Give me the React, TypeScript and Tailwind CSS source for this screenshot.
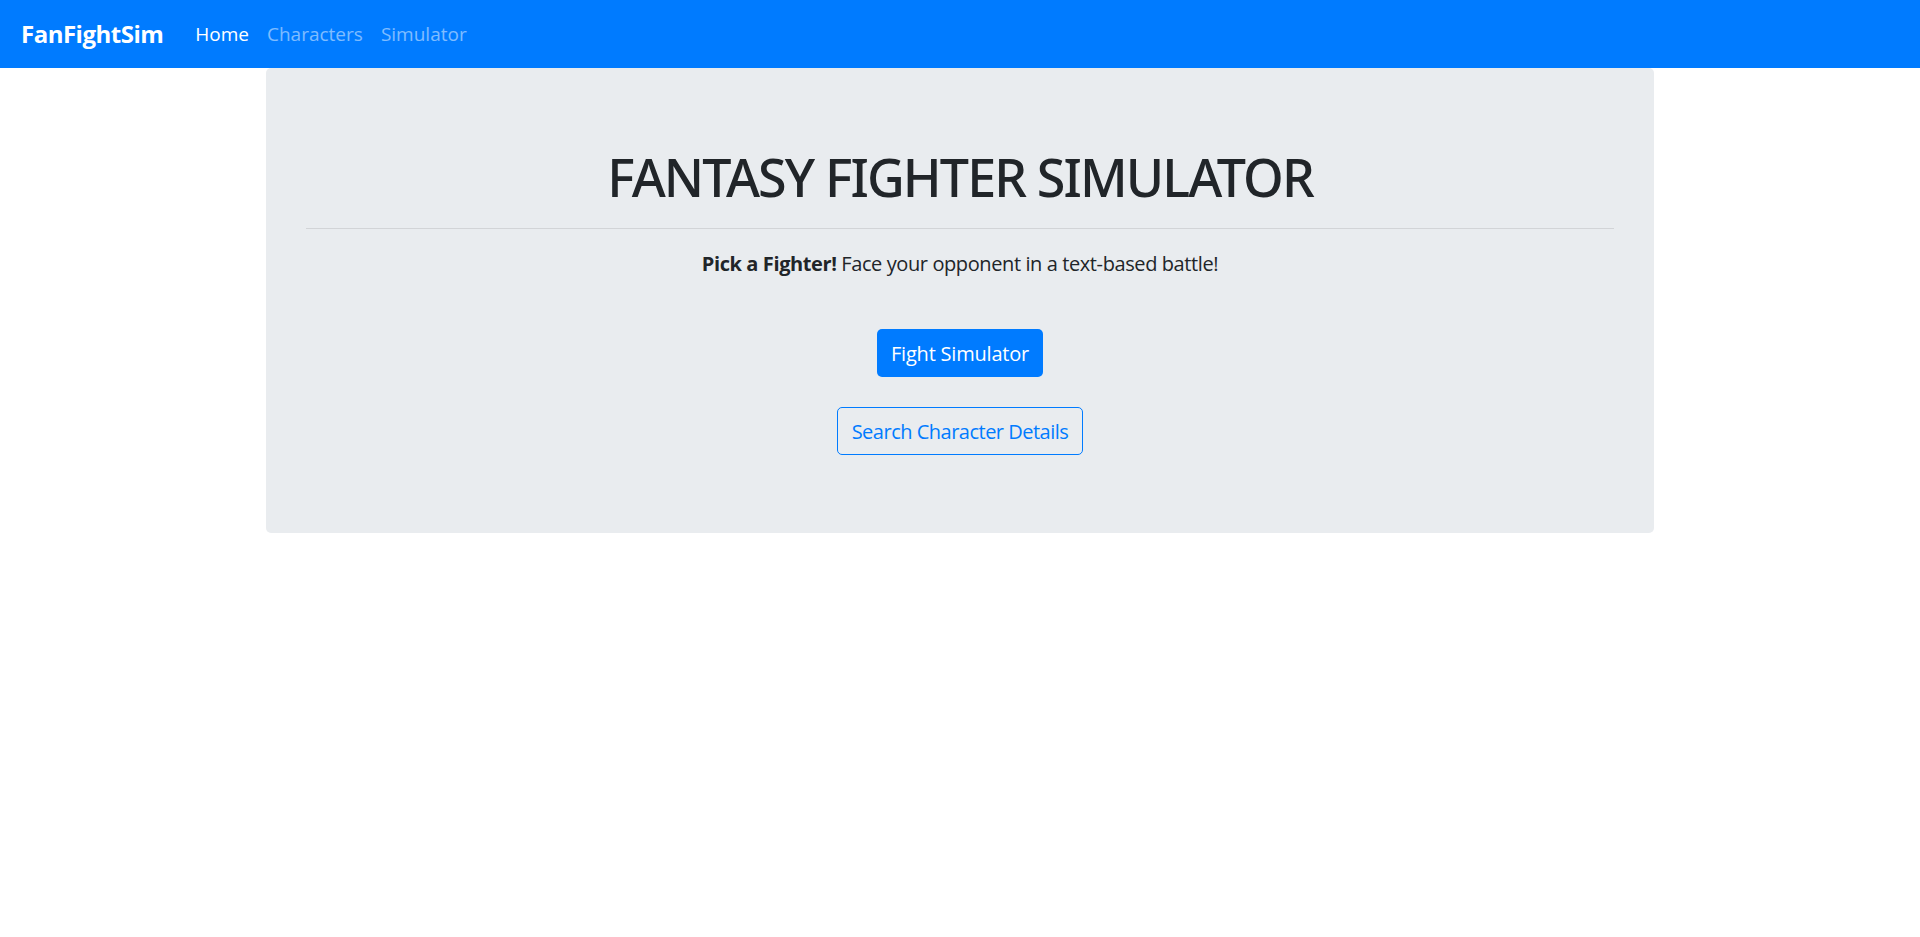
import React from "react";

export default function App() {
  return (
    <div className="min-h-[937px] bg-white font-['Open_Sans','Noto_Sans',sans-serif]">
      <nav className="h-[68px] bg-[#007bff] flex items-center pl-[21px]">
        <span className="text-[24px] font-bold text-white leading-none tracking-[-0.5px]">FanFightSim</span>
        <div className="flex items-center ml-[32px] gap-[18px] text-[19px] leading-none">
          <span className="text-white">Home</span>
          <span className="text-white/50">Characters</span>
          <span className="text-white/50">Simulator</span>
        </div>
      </nav>
      <div className="mx-auto w-[1388px] h-[465px] bg-[#e9ecef] rounded-[5px] px-[40px] pt-[75px] text-[#212529]">
        <h1 className="text-center text-[52px] leading-[67px] font-['Noto_Sans','Open_Sans',sans-serif] font-medium tracking-[-1.9px]">FANTASY FIGHTER SIMULATOR</h1>
        <hr className="mt-[18px] border-0 border-t border-[#d2d4d7]" />
        <p className="text-center text-[20px] leading-[30px] mt-[20px] tracking-[-0.4px]">
          <span className="font-bold">Pick a Fighter!</span> Face your opponent in a text-based battle!
        </p>
        <div className="flex flex-col items-center mt-[50px] gap-[30px]">
          <button className="h-[48px] w-[166px] rounded-[5px] bg-[#007bff] text-white text-[20px] tracking-[-0.2px] pt-[1px]">Fight Simulator</button>
          <button className="h-[48px] w-[246px] rounded-[5px] border border-[#007bff] text-[#007bff] text-[20px] tracking-[-0.5px] pt-[1px]">Search Character Details</button>
        </div>
      </div>
    </div>
  );
}
